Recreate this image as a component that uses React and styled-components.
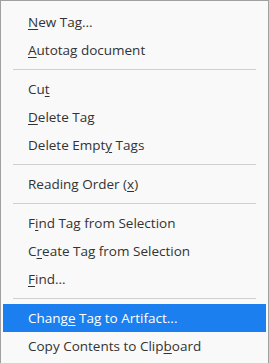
import React from "react";
import styled, { createGlobalStyle } from "styled-components";

const Global = createGlobalStyle`
  html, body {
    margin: 0;
    padding: 0;
    background: #f9f9f9;
  }
  body {
    font-family: "Open Sans", "Noto Sans", "Liberation Sans", sans-serif;
  }
`;

const Menu = styled.ul`
  list-style: none;
  margin: 0;
  width: 269px;
  min-height: 363px;
  box-sizing: border-box;
  padding: 7px 2px 8px 2px;
  background: #f9f9f9;
  border: 1px solid #a0a0a0;
  border-bottom: none;
`;

const Item = styled.li`
  height: 28px;
  display: flex;
  align-items: center;
  padding-left: 25px;
  font-size: 13.5px;
  color: ${(p) => (p.$active ? "#ffffff" : "#333333")};
  background: ${(p) => (p.$active ? "#1b7ff0" : "transparent")};
  white-space: pre;
  cursor: default;
`;

const Key = styled.span`
  text-decoration: underline;
  text-underline-offset: 2px;
  text-decoration-thickness: 1px;
`;

const Separator = styled.li`
  height: 11px;
  display: flex;
  align-items: center;
  padding: 0 10px;
  &::after {
    content: "";
    flex: 1;
    height: 1px;
    background: #d0d0d0;
  }
`;

const items = [
  { pre: "", key: "N", post: "ew Tag..." },
  { pre: "", key: "A", post: "utotag document" },
  "sep",
  { pre: "Cu", key: "t", post: "" },
  { pre: "", key: "D", post: "elete Tag" },
  { pre: "Delete Empt", key: "y", post: " Tags" },
  "sep",
  { pre: "Reading Order (", key: "x", post: ")" },
  "sep",
  { pre: "F", key: "i", post: "nd Tag from Selection" },
  { pre: "C", key: "r", post: "eate Tag from Selection" },
  { pre: "", key: "F", post: "ind..." },
  "sep",
  { pre: "Chang", key: "e", post: " Tag to Artifact...", active: true },
  { pre: "Copy Contents to Clip", key: "b", post: "oard" },
];

export default function App() {
  return (
    <>
      <Global />
      <Menu>
        {items.map((it, i) =>
          it === "sep" ? (
            <Separator key={i} />
          ) : (
            <Item key={i} $active={it.active}>
              <span>
                {it.pre}
                <Key>{it.key}</Key>
                {it.post}
              </span>
            </Item>
          )
        )}
      </Menu>
    </>
  );
}
